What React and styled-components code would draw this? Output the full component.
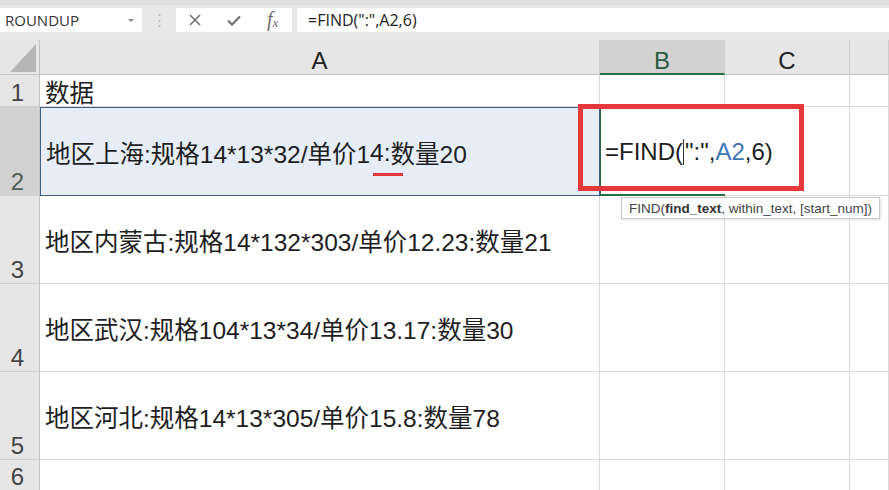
import React from "react";
import styled, { createGlobalStyle } from "styled-components";

const GlobalStyle = createGlobalStyle`
  html, body, #root {
    margin: 0;
    padding: 0;
    width: 100%;
    height: 100%;
    overflow: hidden;
  }
  body {
    background: #fff;
    font-family: "Liberation Sans", "Noto Sans CJK SC", sans-serif;
    color: #222;
  }
  * { box-sizing: border-box; }
`;

const rows = [
  { n: 1, h: 32, text: "数据" },
  { n: 2, h: 89, active: true },
  { n: 3, h: 88, text: "地区内蒙古:规格14*132*303/单价12.23:数量21" },
  { n: 4, h: 88, text: "地区武汉:规格104*13*34/单价13.17:数量30" },
  { n: 5, h: 88, text: "地区河北:规格14*13*305/单价15.8:数量78" },
  { n: 6, h: 31 },
];

export default function App() {
  return (
    <Page>
      <GlobalStyle />
      <Toolbar>
        <NameBox>
          ROUNDUP
          <Arrow />
        </NameBox>
        <Grip>⋮</Grip>
        <ButtonBox>
          <IconSlot>
            <svg width="14" height="12" viewBox="0 0 14 12">
              <path d="M2 1 L12 11 M12 1 L2 11" stroke="#6d6d6d" strokeWidth="1.5" fill="none" />
            </svg>
          </IconSlot>
          <IconSlot>
            <svg width="14" height="11" viewBox="0 0 14 11">
              <path d="M1 5.5 L5 9.5 L13 1.5" stroke="#6d6d6d" strokeWidth="2" fill="none" />
            </svg>
          </IconSlot>
          <IconSlot>
            <Fx>
              f<sub>x</sub>
            </Fx>
          </IconSlot>
        </ButtonBox>
        <FormulaBox>=FIND(":",A2,6)</FormulaBox>
      </Toolbar>

      <Sheet>
        <Corner>
          <svg width="26" height="28" viewBox="0 0 26 28">
            <polygon points="26,0 26,28 0,28" fill="#b5b5b5" />
          </svg>
        </Corner>
        <ColHead>A</ColHead>
        <ColHead $active>B</ColHead>
        <ColHead>C</ColHead>
        <ColHead />

        {rows.map((r) =>
          r.active ? (
            <React.Fragment key={r.n}>
              <RowHead $active>{r.n}</RowHead>
              <Cell $ref>
                地区上海:规格14*13*32/单价1<Marked>4:</Marked>数量20
              </Cell>
              <EditCell>
                <EditText>
                  =FIND(<Caret />":",<RefText>A2</RefText>,6)
                </EditText>
                <RedFrame />
                <Tip>
                  FIND(<b>find_text</b>, within_text, [start_num])
                </Tip>
              </EditCell>
              <Cell />
              <Cell />
            </React.Fragment>
          ) : (
            <React.Fragment key={r.n}>
              <RowHead>{r.n}</RowHead>
              <Cell>{r.text}</Cell>
              <Cell />
              <Cell />
              <Cell />
            </React.Fragment>
          )
        )}
      </Sheet>
    </Page>
  );
}

const Page = styled.div`
  display: flex;
  flex-direction: column;
  height: 100%;
`;

const Toolbar = styled.div`
  flex: none;
  height: 40px;
  display: flex;
  align-items: flex-start;
  background: #e8e8e8;
  border-top: 5px solid #e1e1e1;
  padding-top: 3px;
`;

const NameBox = styled.div`
  position: relative;
  width: 142px;
  height: 24px;
  background: #fff;
  display: flex;
  align-items: center;
  padding-left: 5px;
  font-family: "Open Sans", "Liberation Sans", sans-serif;
  font-size: 15px;
  color: #333;
`;

const Arrow = styled.span`
  position: absolute;
  right: 8px;
  top: 11px;
  border-left: 3px solid transparent;
  border-right: 3px solid transparent;
  border-top: 3px solid #8a8a8a;
`;

const Grip = styled.div`
  width: 34px;
  height: 24px;
  display: flex;
  align-items: center;
  justify-content: center;
  color: #bdbdbd;
  font-size: 15px;
`;

const ButtonBox = styled.div`
  width: 116px;
  height: 24px;
  background: #fff;
  display: flex;
`;

const IconSlot = styled.div`
  flex: 1;
  display: flex;
  align-items: center;
  justify-content: center;
`;

const Fx = styled.span`
  font-family: "Liberation Serif", serif;
  font-style: italic;
  font-size: 20px;
  line-height: 1;
  color: #6d6d6d;
  margin-top: -2px;
  sub {
    font-size: 13px;
    vertical-align: -1px;
  }
`;

const FormulaBox = styled.div`
  flex: 1;
  height: 24px;
  margin-left: 5px;
  background: #fff;
  display: flex;
  align-items: center;
  padding-left: 11px;
  font-family: "Open Sans", "Liberation Sans", sans-serif;
  font-size: 16px;
  color: #222;
`;

const Sheet = styled.div`
  flex: 1;
  display: grid;
  grid-template-columns: 40px 560px 125px 125px 1fr;
  grid-template-rows: 35px ${rows.map((r) => r.h + "px").join(" ")};
  background: #fff;
  overflow: hidden;
`;

const Corner = styled.div`
  background: #e6e6e6;
  border-right: 1px solid #c3c3c3;
  border-bottom: 1px solid #c3c3c3;
  display: flex;
  align-items: flex-end;
  justify-content: flex-end;
  padding: 0 3px 2px 0;
`;

const ColHead = styled.div`
  background: ${(p) => (p.$active ? "#d2d2d2" : "#e6e6e6")};
  color: ${(p) => (p.$active ? "#2a5a40" : "#222")};
  border-right: 1px solid #cbcbcb;
  border-bottom: ${(p) => (p.$active ? "2px solid #217346" : "1px solid #c3c3c3")};
  display: flex;
  align-items: flex-end;
  justify-content: center;
  font-size: 24px;
  line-height: 1;
  padding-bottom: ${(p) => (p.$active ? "0" : "1px")};
`;

const RowHead = styled.div`
  background: ${(p) => (p.$active ? "#d2d2d2" : "#e6e6e6")};
  color: ${(p) => (p.$active ? "#4f5f55" : "#444")};
  border-right: 1px solid #c3c3c3;
  border-bottom: 1px solid #cfcfcf;
  display: flex;
  align-items: flex-end;
  justify-content: center;
  padding: 0 4px 1px 0;
  font-size: 24px;
  line-height: 1;
`;

const Cell = styled.div`
  display: flex;
  align-items: center;
  padding: 2px 0 0 5px;
  white-space: nowrap;
  font-size: 24.5px;
  color: #1e1e1e;
  border-right: 1px solid #dadada;
  border-bottom: 1px solid #dadada;
  background: ${(p) => (p.$ref ? "#e6edf7" : "transparent")};
  ${(p) => p.$ref && "border: 1px solid #3d5f8c;"}
`;

const Marked = styled.span`
  position: relative;
  &::after {
    content: "";
    position: absolute;
    left: 3px;
    width: 30px;
    top: calc(100% + 6px);
    height: 3px;
    background: #e5383b;
  }
`;

const EditCell = styled.div`
  position: relative;
  z-index: 2;
  display: flex;
  align-items: center;
  padding: 2px 0 0 4px;
  border-left: 1px solid #2a6b46;
  border-bottom: 2px solid #217346;
`;

const EditText = styled.span`
  white-space: nowrap;
  font-size: 24px;
  color: #1e1e1e;
  background: #fff;
  padding-right: 4px;
`;

const Caret = styled.span`
  display: inline-block;
  width: 1px;
  height: 26px;
  background: #333;
  vertical-align: -5px;
  margin-right: 1px;
`;

const RefText = styled.span`
  color: #3f74b5;
`;

const RedFrame = styled.div`
  position: absolute;
  left: -23px;
  top: -3px;
  width: 226px;
  height: 87px;
  border: 5px solid #e5383b;
  pointer-events: none;
`;

const Tip = styled.div`
  position: absolute;
  left: 20px;
  top: 90px;
  height: 22px;
  padding: 0 7px;
  display: flex;
  align-items: center;
  white-space: nowrap;
  font-size: 13.5px;
  color: #444;
  background: #fff;
  border: 1px solid #c8c8c8;
  box-shadow: 1px 1px 2px rgba(0, 0, 0, 0.12);
  b {
    color: #333;
  }
`;
